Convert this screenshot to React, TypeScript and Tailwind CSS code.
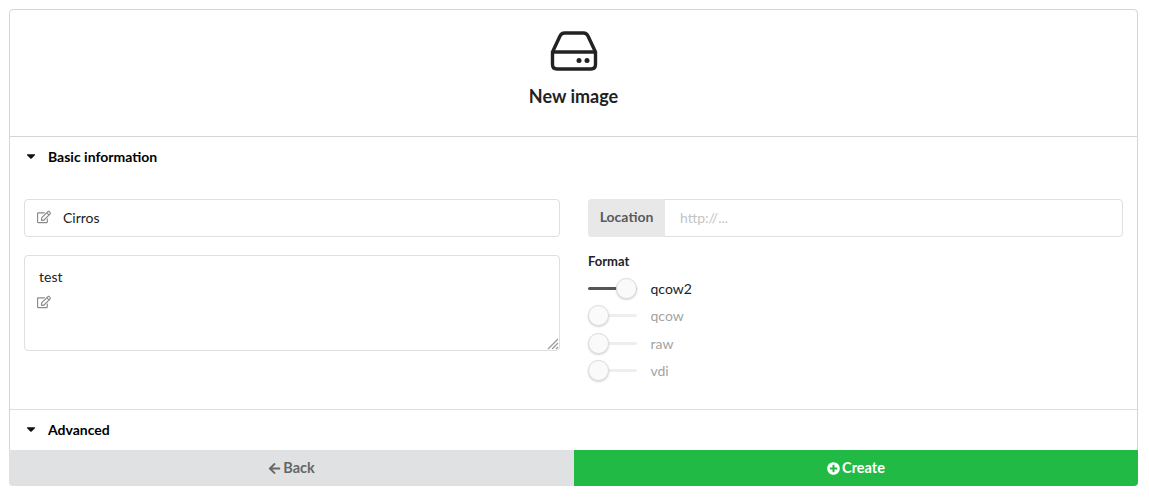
import { FaArrowLeft, FaCaretDown, FaPlusCircle, FaRegEdit } from 'react-icons/fa';

const formats = [
  { name: 'qcow2', on: true },
  { name: 'qcow', on: false },
  { name: 'raw', on: false },
  { name: 'vdi', on: false },
];

function ImageIcon() {
  return (
    <svg width="48" height="40" viewBox="0 0 48 40" fill="none" className="block">
      <path
        d="M2.5 21 L10 5 Q11.5 2 14.5 2 H33.5 Q36.5 2 38 5 L45.5 21 V33.5 Q45.5 38 41 38 H7 Q2.5 38 2.5 33.5 Z"
        stroke="#222"
        strokeWidth="3.4"
        strokeLinejoin="round"
      />
      <path d="M2.5 21 H45.5" stroke="#222" strokeWidth="3.4" />
      <circle cx="29" cy="29.5" r="2.5" fill="#222" />
      <circle cx="37" cy="29.5" r="2.5" fill="#222" />
    </svg>
  );
}

function SectionTitle({ label }: { label: string }) {
  return (
    <div className="flex items-center text-[14px] font-bold text-black">
      <FaCaretDown className="ml-[14px] w-[14px] h-[14px] text-[#111] -mt-[3px]" />
      <span className="ml-[10px]">{label}</span>
    </div>
  );
}

function Toggle({ name, on }: { name: string; on: boolean }) {
  return (
    <div className="flex items-center h-[27.3px]">
      <div className="relative w-[49px] h-[21px]">
        <div className={`absolute left-0 right-0 top-[9px] h-[3px] rounded-full ${on ? 'bg-[#555]' : 'bg-[#eeeeee]'}`} />
        <div
          className={`absolute top-0 w-[21px] h-[21px] rounded-full bg-[#fafafa] border border-[#ddd] shadow-[0_1px_2px_rgba(34,36,38,0.2)] ${on ? 'left-[28px]' : 'left-0'}`}
        />
      </div>
      <span className={`ml-[13.5px] text-[14px] ${on ? 'text-[#222]' : 'text-[#a3a3a3]'}`}>{name}</span>
    </div>
  );
}

export default function App() {
  return (
    <div className="min-h-[500px] bg-white px-[9px] pt-[9px] font-['Lato','Open_Sans',sans-serif]">
      <div className="w-[1129px]">
        <div className="h-[128px] flex flex-col items-center border border-[#d4d4d5] rounded-t-[4px]">
          <div className="mt-[21px]">
            <ImageIcon />
          </div>
          <div className="mt-[13px] text-[18px] leading-[24px] font-bold text-[#222]">New image</div>
        </div>
        <div className="h-[313px] flex flex-col border-x border-[#d4d4d5]">
          <div className="pt-[10px] h-[62px] leading-[20px]">
            <SectionTitle label="Basic information" />
          </div>
          <div className="flex px-[14px] h-[210px]">
            <div className="w-[536px]">
              <div className="flex items-center h-[38px] pb-[2px] border border-[#dfdfdf] rounded-[4px] text-[14px] text-[#222]">
                <FaRegEdit className="ml-[12px] w-[14px] h-[14px] text-[#8a8a8a]" />
                <span className="ml-[12px]">Cirros</span>
              </div>
              <div className="relative mt-[18px] h-[96px] border border-[#dfdfdf] rounded-[4px] text-[14px] text-[#222]">
                <div className="ml-[14px] mt-[11px] leading-[20px]">test</div>
                <FaRegEdit className="ml-[12px] mt-[8px] w-[14px] h-[14px] text-[#8a8a8a]" />
                <svg width="12" height="12" viewBox="0 0 12 12" className="absolute right-0 bottom-0">
                  <path d="M1 11 L11 1 M5 11 L11 5 M9 11 L11 9" stroke="#999" strokeWidth="1.2" />
                </svg>
              </div>
            </div>
            <div className="ml-[28px] w-[535px]">
              <div className="flex h-[38px] border border-[#dfdfdf] rounded-[4px] text-[14px]">
                <div className="w-[77px] -my-px -ml-px pb-[4px] flex items-center justify-center bg-[#e8e8e8] rounded-l-[4px] font-bold text-[#5a5a5a]">
                  Location
                </div>
                <div className="flex items-center ml-[15px] pb-[2px] text-[#c4c4c4]">http://...</div>
              </div>
              <div className="mt-[15px] text-[13px] leading-[18px] font-bold text-[#222]">Format</div>
              <div className="mt-[5px]">
                {formats.map((f) => (
                  <Toggle key={f.name} name={f.name} on={f.on} />
                ))}
              </div>
            </div>
          </div>
          <div className="border-t border-[#dededf] pt-[10px] leading-[20px]">
            <SectionTitle label="Advanced" />
          </div>
        </div>
        <div className="flex h-[36px] text-[14.5px] font-bold">
          <div className="w-[565px] flex items-center justify-center bg-[#e0e1e2] text-[#666] rounded-bl-[4px]">
            <FaArrowLeft className="w-[13px] h-[13px] mr-[2px]" />
            Back
          </div>
          <div className="flex-1 flex items-center justify-center bg-[#21ba45] text-white rounded-br-[4px]">
            <FaPlusCircle className="w-[13px] h-[13px] mr-[2px]" />
            Create
          </div>
        </div>
      </div>
    </div>
  );
}
